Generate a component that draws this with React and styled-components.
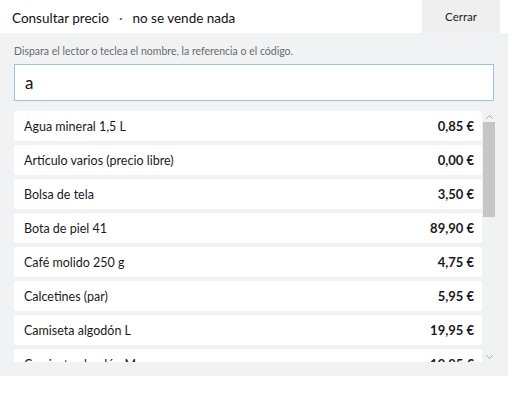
import React, { useEffect, useRef, useState } from 'react';
import styled, { createGlobalStyle } from 'styled-components';

const GlobalStyle = createGlobalStyle`
    html, body {
        margin: 0;
        padding: 0;
        background: #ffffff;
    }
    body {
        font-family: "Segoe UI", Lato, "Noto Sans", sans-serif;
        color: #1a1a1a;
    }
    * {
        box-sizing: border-box;
    }
`;

const Ventana = styled.div`
    width: 508px;
    display: flex;
    flex-direction: column;
`;

const Cabecera = styled.header`
    display: flex;
    align-items: stretch;
    height: 33px;
    background: #ffffff;
`;

const Titulo = styled.h1`
    flex: 1;
    margin: 0;
    padding: 2px 0 0 12px;
    display: flex;
    align-items: center;
    gap: 10px;
    font-size: 13.5px;
    font-weight: 400;
    color: #111;
`;

const Punto = styled.span`
    color: #555;
`;

const BotonCerrar = styled.button`
    width: 78px;
    margin-right: 8px;
    padding-top: 1px;
    border: none;
    background: #efefef;
    font-family: inherit;
    font-size: 11.5px;
    color: #222;
    cursor: pointer;
`;

const Cuerpo = styled.section`
    background: #f1f2f4;
    padding: 12px 14px 14px 14px;
    display: flex;
    flex-direction: column;
`;

const Ayuda = styled.p`
    margin: 0 0 7px 0;
    font-size: 10.5px;
    color: #6b6b6b;
`;

const Entrada = styled.input`
    width: 480px;
    height: 37px;
    padding: 0 10px;
    border: 1px solid #9cc3e6;
    background: #ffffff;
    font-family: inherit;
    font-size: 17px;
    color: #111;
    outline: none;
`;

const Resultados = styled.div`
    margin-top: 10px;
    width: 481px;
    height: 251px;
    display: flex;
    gap: 1px;
`;

const Lista = styled.ul`
    flex: 1;
    list-style: none;
    margin: 0;
    padding: 0;
    overflow-y: auto;
    scrollbar-width: none;
    display: flex;
    flex-direction: column;
    gap: 4px;

    &::-webkit-scrollbar {
        display: none;
    }
`;

const Fila = styled.li`
    flex: 0 0 30px;
    display: flex;
    align-items: center;
    justify-content: space-between;
    padding: 0 8px 0 10px;
    background: #ffffff;
    border-radius: 2px;
    font-size: 12.5px;
    cursor: pointer;

    &:hover {
        background: #f7f9fc;
    }
`;

const Precio = styled.span`
    font-weight: 700;
    font-size: 13px;
`;

const Barra = styled.div`
    width: 12px;
    display: flex;
    flex-direction: column;
    background: #f1f2f4;
`;

const Flecha = styled.button`
    flex: 0 0 11px;
    padding: 0;
    border: none;
    background: transparent;
    display: flex;
    align-items: center;
    justify-content: center;
    cursor: pointer;
`;

const Carril = styled.div`
    flex: 1;
    position: relative;
`;

const Pulgar = styled.div`
    position: absolute;
    left: 0;
    right: 0;
    background: #c6c6c6;
`;

const productos = [
    { id: 1, nombre: 'Agua mineral 1,5 L', precio: 0.85 },
    { id: 2, nombre: 'Artículo varios (precio libre)', precio: 0 },
    { id: 3, nombre: 'Bolsa de tela', precio: 3.5 },
    { id: 4, nombre: 'Bota de piel 41', precio: 89.9 },
    { id: 5, nombre: 'Café molido 250 g', precio: 4.75 },
    { id: 6, nombre: 'Calcetines (par)', precio: 5.95 },
    { id: 7, nombre: 'Camiseta algodón L', precio: 19.95 },
    { id: 8, nombre: 'Camiseta algodón M', precio: 19.95 },
    { id: 9, nombre: 'Cuaderno A5', precio: 2.4 },
    { id: 10, nombre: 'Gafas de sol', precio: 24.9 },
    { id: 11, nombre: 'Galletas de avena', precio: 1.85 },
    { id: 12, nombre: 'Jabón natural', precio: 3.2 },
    { id: 13, nombre: 'Lámpara de mesa', precio: 29.95 },
    { id: 14, nombre: 'Manta de lana', precio: 34.5 },
    { id: 15, nombre: 'Mochila de viaje', precio: 39.9 },
    { id: 16, nombre: 'Paraguas plegable', precio: 12.5 },
    { id: 17, nombre: 'Taza de cerámica', precio: 6.75 },
    { id: 18, nombre: 'Vela aromática', precio: 4.5 },
];

const formatoEuro = (valor) =>
    valor.toFixed(2).replace('.', ',') + ' €';

const FlechaIcono = ({ abajo }) => (
    <svg width="7" height="4" viewBox="0 0 7 4">
        <path
            d={abajo ? 'M0.5 0.5 L3.5 3.5 L6.5 0.5' : 'M0.5 3.5 L3.5 0.5 L6.5 3.5'}
            fill="none"
            stroke="#a3a3a3"
            strokeWidth="1"
        />
    </svg>
);

const App = () => {
    const [texto, setTexto] = useState('a');
    const [scroll, setScroll] = useState({ top: 0, alto: 1, visible: 1 });
    const entradaRef = useRef(null);
    const listaRef = useRef(null);

    const medir = () => {
        const lista = listaRef.current;
        if (!lista) return;
        setScroll({
            top: lista.scrollTop,
            alto: lista.scrollHeight,
            visible: lista.clientHeight,
        });
    };

    useEffect(() => {
        const entrada = entradaRef.current;
        if (entrada) {
            entrada.focus();
            entrada.setSelectionRange(0, 0);
        }
        medir();
    }, []);

    const filtrados = productos.filter(p =>
        p.nombre.toLowerCase().includes(texto.toLowerCase())
    );

    useEffect(medir, [filtrados.length]);

    const mover = (delta) => {
        if (listaRef.current) listaRef.current.scrollTop += delta;
    };

    // thumb size and offset follow the list's scroll state
    const carrilAlto = scroll.visible - 22;
    const pulgarAlto = Math.max(20, carrilAlto * scroll.visible / scroll.alto);
    const recorrido = scroll.alto - scroll.visible;
    const pulgarTop = recorrido > 0 ? (carrilAlto - pulgarAlto) * scroll.top / recorrido : 0;

    return (
        <>
            <GlobalStyle />
            <Ventana>
                <Cabecera>
                    <Titulo>
                        <span>Consultar precio</span>
                        <Punto>·</Punto>
                        <span>no se vende nada</span>
                    </Titulo>
                    <BotonCerrar>Cerrar</BotonCerrar>
                </Cabecera>
                <Cuerpo>
                    <Ayuda>Dispara el lector o teclea el nombre, la referencia o el código.</Ayuda>
                    <Entrada
                        ref={entradaRef}
                        value={texto}
                        onChange={e => setTexto(e.target.value)}
                    />
                    <Resultados>
                        <Lista ref={listaRef} onScroll={medir}>
                            {filtrados.map(p => (
                                <Fila key={p.id}>
                                    <span>{p.nombre}</span>
                                    <Precio>{formatoEuro(p.precio)}</Precio>
                                </Fila>
                            ))}
                        </Lista>
                        {recorrido > 0 && (
                            <Barra>
                                <Flecha onClick={() => mover(-34)}>
                                    <FlechaIcono />
                                </Flecha>
                                <Carril>
                                    <Pulgar style={{ top: pulgarTop, height: pulgarAlto }} />
                                </Carril>
                                <Flecha onClick={() => mover(34)}>
                                    <FlechaIcono abajo />
                                </Flecha>
                            </Barra>
                        )}
                    </Resultados>
                </Cuerpo>
            </Ventana>
        </>
    );
};

export default App;
